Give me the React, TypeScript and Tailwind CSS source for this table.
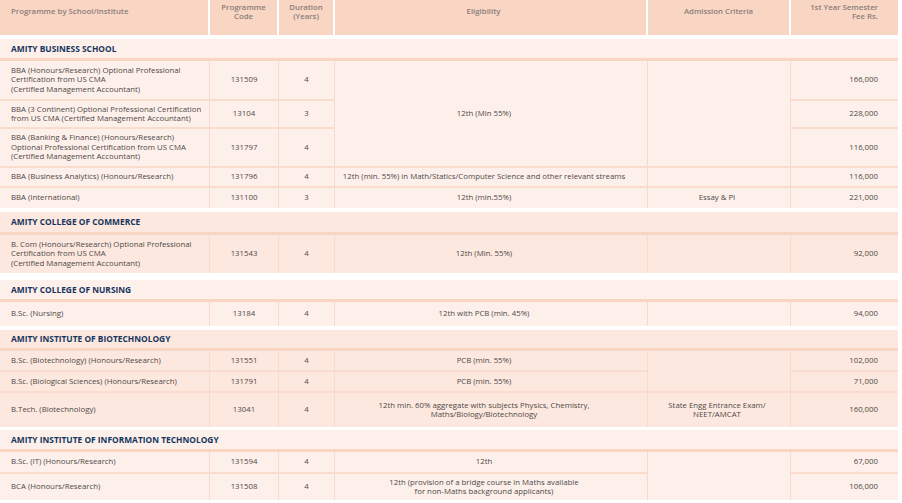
import React from "react";

type Span = { text?: React.ReactNode; span?: number } | null;

type Row = {
  prog: React.ReactNode;
  code: string;
  dur: string;
  elig: Span;
  adm: Span;
  fee: string;
  h: number;
};

type Section = {
  name: string;
  dark?: boolean;
  headH: number;
  gap: number;
  rows: Row[];
};

const sections: Section[] = [
  {
    name: "AMITY BUSINESS SCHOOL",
    headH: 22,
    gap: 4,
    rows: [
      {
        prog: (
          <>
            BBA (Honours/Research) Optional Professional
            <br />
            Certification from US CMA
            <br />
            (Certified Management Accountant)
          </>
        ),
        code: "131509",
        dur: "4",
        elig: { text: "12th (Min 55%)", span: 3 },
        adm: { span: 3 },
        fee: "166,000",
        h: 40,
      },
      {
        prog: (
          <>
            BBA (3 Continent) Optional Professional Certification
            <br />
            from US CMA (Certified Management Accountant)
          </>
        ),
        code: "13104",
        dur: "3",
        elig: null,
        adm: null,
        fee: "228,000",
        h: 28,
      },
      {
        prog: (
          <>
            BBA (Banking &amp; Finance) (Honours/Research)
            <br />
            Optional Professional Certification from US CMA
            <br />
            (Certified Management Accountant)
          </>
        ),
        code: "131797",
        dur: "4",
        elig: null,
        adm: null,
        fee: "116,000",
        h: 39,
      },
      {
        prog: "BBA (Business Analytics) (Honours/Research)",
        code: "131796",
        dur: "4",
        elig: {
          text: "12th (min. 55%) in Math/Statics/Computer Science and other relevant streams",
        },
        adm: {},
        fee: "116,000",
        h: 20,
      },
      {
        prog: "BBA (International)",
        code: "131100",
        dur: "3",
        elig: { text: "12th (min.55%)" },
        adm: { text: "Essay & PI" },
        fee: "221,000",
        h: 20,
      },
    ],
  },
  {
    name: "AMITY COLLEGE OF COMMERCE",
    dark: true,
    headH: 23,
    gap: 7,
    rows: [
      {
        prog: (
          <>
            B. Com (Honours/Research) Optional Professional
            <br />
            Certification from US CMA
            <br />
            (Certified Management Accountant)
          </>
        ),
        code: "131543",
        dur: "4",
        elig: { text: "12th (Min. 55%)" },
        adm: {},
        fee: "92,000",
        h: 38,
      },
    ],
  },
  {
    name: "AMITY COLLEGE OF NURSING",
    headH: 22,
    gap: 4,
    rows: [
      {
        prog: "B.Sc. (Nursing)",
        code: "13184",
        dur: "4",
        elig: { text: "12th with PCB (min. 45%)" },
        adm: {},
        fee: "94,000",
        h: 24,
      },
    ],
  },
  {
    name: "AMITY INSTITUTE OF BIOTECHNOLOGY",
    dark: true,
    headH: 21,
    gap: 3,
    rows: [
      {
        prog: "B.Sc. (Biotechnology) (Honours/Research)",
        code: "131551",
        dur: "4",
        elig: { text: "PCB (min. 55%)" },
        adm: { span: 2 },
        fee: "102,000",
        h: 21,
      },
      {
        prog: "B.Sc. (Biological Sciences) (Honours/Research)",
        code: "131791",
        dur: "4",
        elig: { text: "PCB (min. 55%)" },
        adm: null,
        fee: "71,000",
        h: 21,
      },
      {
        prog: "B.Tech. (Biotechnology)",
        code: "13041",
        dur: "4",
        elig: {
          text: (
            <>
              12th min. 60% aggregate with subjects Physics, Chemistry,
              <br />
              Maths/Biology/Biotechnology
            </>
          ),
        },
        adm: {
          text: (
            <>
              State Engg Entrance Exam/
              <br />
              NEET/AMCAT
            </>
          ),
        },
        fee: "160,000",
        h: 34,
      },
    ],
  },
  {
    name: "AMITY INSTITUTE OF INFORMATION TECHNOLOGY",
    headH: 22,
    gap: 0,
    rows: [
      {
        prog: "B.Sc. (IT) (Honours/Research)",
        code: "131594",
        dur: "4",
        elig: { text: "12th" },
        adm: { span: 2 },
        fee: "67,000",
        h: 22,
      },
      {
        prog: "BCA (Honours/Research)",
        code: "131508",
        dur: "4",
        elig: {
          text: (
            <>
              12th (provision of a bridge course in Maths available
              <br />
              for non-Maths background applicants)
            </>
          ),
        },
        adm: null,
        fee: "106,000",
        h: 26,
      },
    ],
  },
];

const cell = "p-0 align-middle whitespace-nowrap border-r border-[#f8d9ca]";
const rowLine = "border-b-2 border-b-[#f9dccd]";

export default function App() {
  return (
    <div className="w-[902px] h-[503px] overflow-hidden bg-white font-['Open_Sans',sans-serif] text-[7.8px] leading-[9.5px] text-[#4f4846]">
      <table className="w-[898px] table-fixed border-separate border-spacing-0">
        <colgroup>
          <col className="w-[210px]" />
          <col className="w-[69px]" />
          <col className="w-[56px]" />
          <col className="w-[313px]" />
          <col className="w-[143px]" />
          <col className="w-[107px]" />
        </colgroup>
        <thead>
          <tr className="bg-[#f9d5c4] text-[#8a7e78]">
            <th className="h-[35px] border-r-2 border-white p-0 pb-[11px] pl-[11px] text-left align-middle font-semibold">
              Programme by School/Institute
            </th>
            <th className="border-r-2 border-white p-0 pb-[11px] text-center align-middle font-semibold">
              Programme
              <br />
              Code
            </th>
            <th className="border-r-2 border-white p-0 pb-[11px] text-center align-middle font-semibold">
              Duration
              <br />
              (Years)
            </th>
            <th className="border-r-2 border-white p-0 pb-[11px] pr-[14px] text-center align-middle font-semibold">
              Eligibility
            </th>
            <th className="border-r-2 border-white p-0 pb-[11px] text-center align-middle font-semibold">
              Admission Criteria
            </th>
            <th className="p-0 pb-[11px] pr-[20px] text-right align-middle font-semibold">
              1st Year Semester
              <br />
              Fee Rs.
            </th>
          </tr>
          <tr>
            <td colSpan={6} className="h-[4px] bg-white p-0" />
          </tr>
        </thead>
        <tbody>
          {sections.map((s) => {
            const bg = s.dark ? "bg-[#fce8df]" : "bg-[#fdf0eb]";
            return (
              <React.Fragment key={s.name}>
                <tr className={bg}>
                  <td
                    colSpan={6}
                    style={{ height: s.headH }}
                    className="border-b-[3px] border-[#f9d5c4] p-0 pl-[11px] align-middle text-[8.4px] font-bold text-[#17365d]"
                  >
                    {s.name}
                  </td>
                </tr>
                {s.rows.map((r, i) => {
                  const last = i === s.rows.length - 1;
                  const b = last ? "" : rowLine;
                  const spanLine = (sp: Span) =>
                    i + (sp?.span ?? 1) >= s.rows.length ? "" : rowLine;
                  return (
                    <tr key={r.code} className={bg}>
                      <td style={{ height: r.h }} className={`${cell} ${b} pl-[11px] text-left`}>
                        {r.prog}
                      </td>
                      <td className={`${cell} ${b} text-center`}>{r.code}</td>
                      <td className={`${cell} ${b} text-center`}>{r.dur}</td>
                      {r.elig && (
                        <td
                          rowSpan={r.elig.span ?? 1}
                          className={`${cell} ${spanLine(r.elig)} pr-[14px] text-center`}
                        >
                          {r.elig.text}
                        </td>
                      )}
                      {r.adm && (
                        <td
                          rowSpan={r.adm.span ?? 1}
                          className={`${cell} ${spanLine(r.adm)} pr-[4px] text-center`}
                        >
                          {r.adm.text}
                        </td>
                      )}
                      <td className={`p-0 align-middle whitespace-nowrap ${b} pr-[20px] text-right`}>
                        {r.fee}
                      </td>
                    </tr>
                  );
                })}
                {s.gap > 0 && (
                  <tr>
                    <td colSpan={6} style={{ height: s.gap }} className="bg-white p-0" />
                  </tr>
                )}
              </React.Fragment>
            );
          })}
        </tbody>
      </table>
    </div>
  );
}
